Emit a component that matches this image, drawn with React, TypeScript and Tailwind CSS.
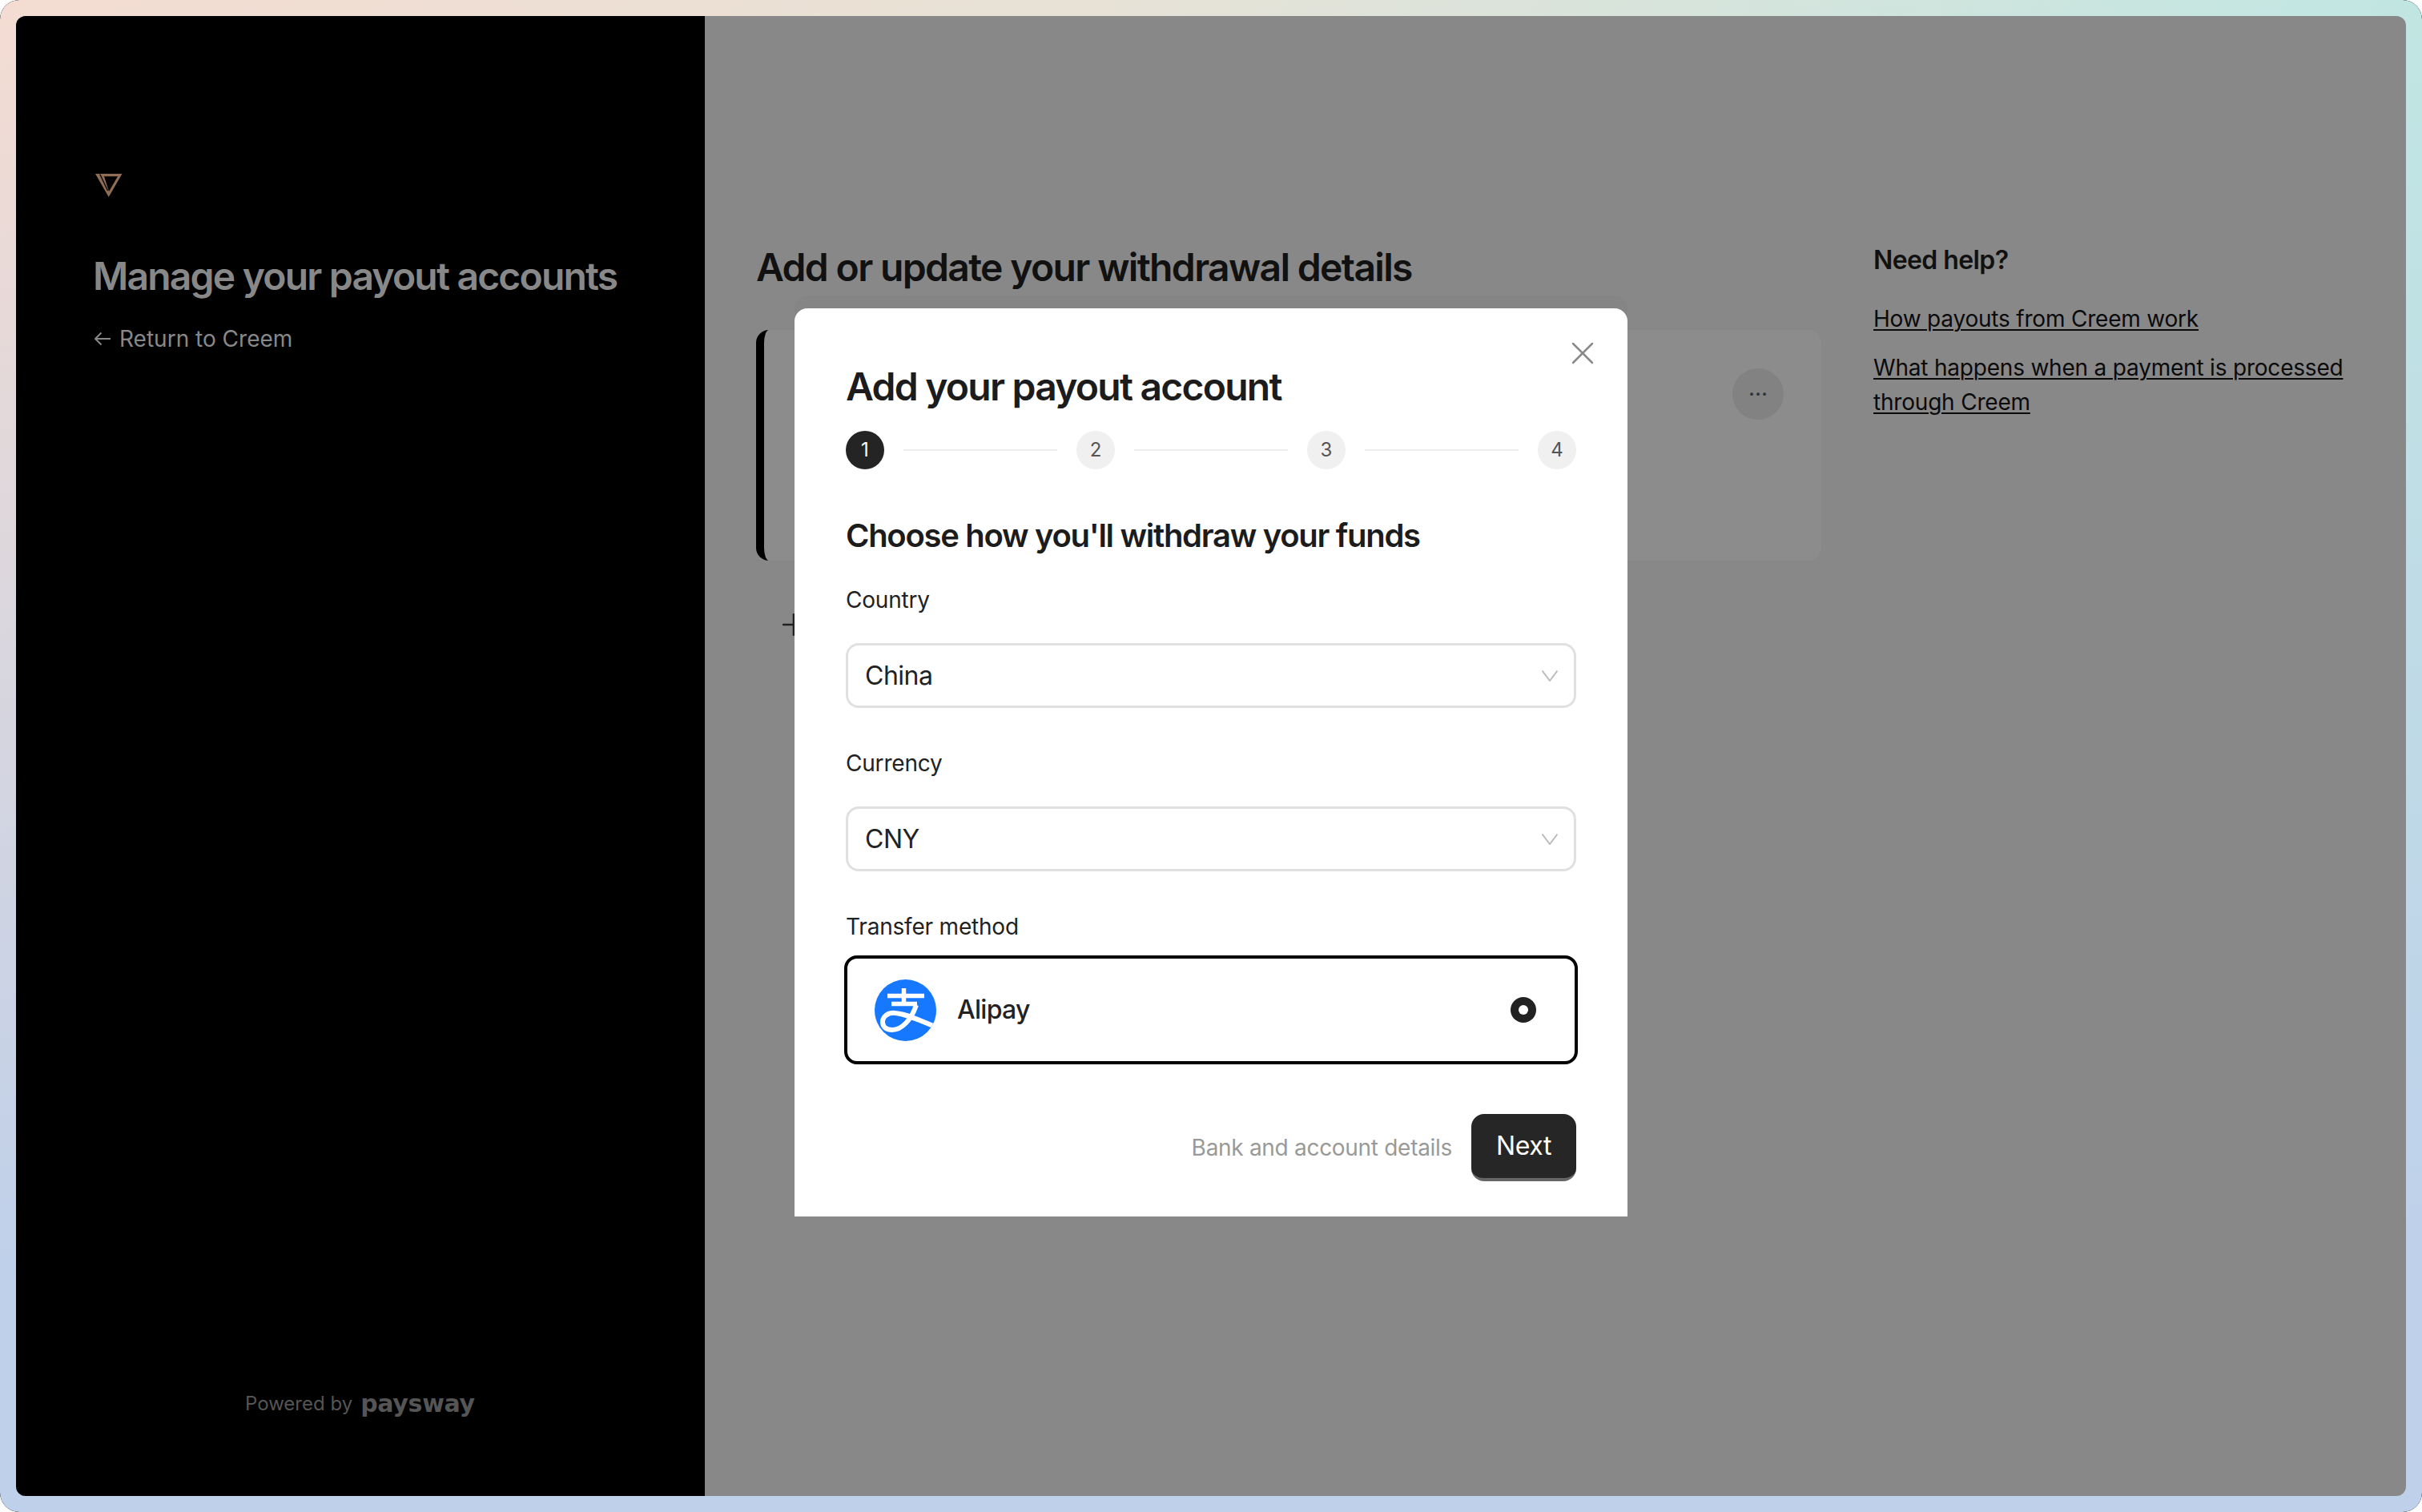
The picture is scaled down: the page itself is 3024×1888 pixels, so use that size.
import { X, Plus } from 'lucide-react';

function Step({ n, active }: { n: number; active?: boolean }) {
  return (
    <div
      className={`flex h-12 w-12 shrink-0 items-center justify-center rounded-full text-[24px] ${
        active ? 'bg-[#242424] text-white' : 'bg-[#f0f0f0] text-[#555555]'
      }`}
    >
      {n}
    </div>
  );
}

function StepLine() {
  return <div className="h-[2px] flex-1 bg-[#eeeeee]" />;
}

function SelectField({ label, value }: { label: string; value: string }) {
  return (
    <div className="flex flex-col">
      <label className="h-[34px] text-[28px] leading-[34px] tracking-[-0.2px] text-[#222222]">{label}</label>
      <div className="mt-[37px] flex h-[81px] items-center justify-between rounded-[16px] border-[3px] border-[#e0e0e0] pl-[21px] pr-[20px] text-[32px] tracking-[-0.5px] text-[#222222]">
        {value}
        <svg viewBox="0 0 20 14" className="h-[14px] w-[20px]">
          <path d="M0.5 0.5 10 13 19.5 0.5" fill="none" stroke="#bdbdbd" strokeWidth="2" />
        </svg>
      </div>
    </div>
  );
}

function AlipayIcon() {
  return (
    <svg viewBox="0 0 77 77" className="h-[77px] w-[77px] shrink-0">
      <clipPath id="alipay-circle">
        <circle cx="38.5" cy="38.5" r="38.5" />
      </clipPath>
      <circle cx="38.5" cy="38.5" r="38.5" fill="#1677ff" />
      <g clipPath="url(#alipay-circle)" fill="none" stroke="#fff" strokeWidth="5.5">
        <path d="M16 20.5H62M36.5 11v19.5M21 30.5H53" />
        <path d="M52 32C46 50 34 63 22 63 13 63 10 58 10 53 10 46 17 41 26 42 38 43 55 50 80 61" strokeWidth="6" />
      </g>
    </svg>
  );
}

export default function App() {
  return (
    <div className="h-[1888px] w-[3024px] overflow-hidden rounded-[24px] bg-[#0b1420]">
      <div className="h-full w-full rounded-[24px] bg-[linear-gradient(to_bottom,rgba(190,210,234,0)_0%,#bed0ea_85%),linear-gradient(to_right,#f4dcd2,#e8e2d6_45%,#c0e6e2)] p-[20px] font-['Inter','Noto_Sans',sans-serif]">
        <div className="flex h-full overflow-hidden rounded-[12px] bg-[#888888]">
          <aside className="flex w-[860px] shrink-0 flex-col bg-black pl-[96px] pr-[60px]">
            <svg viewBox="0 0 34 30" className="ml-[3px] mt-[197px] h-[30px] w-[34px]">
              <path fillRule="evenodd" d="M0 0H33.5L16.7 29ZM11 3.3 17 22 28 3.3Z" fill="#8f6c55" />
              <path d="M5.7 0.5 15.5 21" stroke="#000" strokeWidth="1.3" />
            </svg>
            <h1 className="mt-[66px] whitespace-nowrap text-[48px] font-semibold leading-[64px] tracking-[-1.8px] text-[#888888]">
              Manage your payout accounts
            </h1>
            <a className="mt-[28px] flex items-center gap-[10px] text-[28px] leading-[36px] text-[#888888]">
              <svg viewBox="0 0 22 18" className="ml-[1px] h-[18px] w-[22px]">
                <path d="M21 9H2M9.5 1.5 2 9l7.5 7.5" fill="none" stroke="#888888" strokeWidth="2" />
              </svg>
              Return to Creem
            </a>
            <div className="mt-auto mb-[100px] flex items-center gap-[10px] pl-[190px] text-[#555555]">
              <span className="whitespace-nowrap text-[24px] leading-[30px]">Powered by</span>
              <span className="font-['DejaVu_Sans',sans-serif] text-[30px] font-bold leading-[30px] tracking-[-0.3px]">
                paysway
              </span>
            </div>
          </aside>

          <main className="relative flex flex-1 gap-[65px] pl-[64px] pt-[282px]">
            <section className="w-[1330px] shrink-0">
              <h2 className="text-[48px] font-semibold leading-[64px] tracking-[-1.65px] text-[#111111]">
                Add or update your withdrawal details
              </h2>
              <div className="mt-[46px] flex h-[288px] justify-end rounded-[16px] border-l-[10px] border-black bg-[#8c8c8c] pr-[47px] pt-[48px]">
                <div className="flex h-16 w-16 items-center justify-center rounded-full bg-[#828282] text-[28px] leading-none text-[#333333]">
                  ···
                </div>
              </div>
              <div className="mt-[58px] pl-[25px]">
                <Plus className="h-[44px] w-[44px] text-[#222222]" strokeWidth={1.4} />
              </div>
            </section>

            <aside className="pt-[1px]">
              <h3 className="text-[32px] font-semibold leading-[44px] tracking-[-0.6px] text-[#111111]">Need help?</h3>
              <div className="mt-[30px] flex flex-col gap-[18px] text-[28px] leading-[43px] tracking-[-0.2px] text-[#0a0a0a]">
                <a className="underline decoration-2 underline-offset-[3px]">How payouts from Creem work</a>
                <a className="w-[600px] underline decoration-2 underline-offset-[3px]">
                  What happens when a payment is processed through Creem
                </a>
              </div>
            </aside>

            <div className="absolute left-[112px] top-[365px] h-[1134px] w-[1040px] rounded-t-[16px] bg-white px-[64px] pt-[70px] shadow-[0_-16px_0_rgba(0,0,0,0.02)]">
              <X className="absolute right-[32px] top-[32px] h-[48px] w-[48px] text-[#8a8a8a]" strokeWidth={1.25} />
              <h2 className="text-[48px] font-semibold leading-[56px] tracking-[-1.75px] text-[#1c1c1c]">
                Add your payout account
              </h2>
              <div className="mt-[27px] flex items-center gap-[24px]">
                <Step n={1} active />
                <StepLine />
                <Step n={2} />
                <StepLine />
                <Step n={3} />
                <StepLine />
                <Step n={4} />
              </div>
              <h3 className="mt-[59px] text-[40px] font-semibold leading-[48px] tracking-[-1.3px] text-[#1c1c1c]">
                Choose how you'll withdraw your funds
              </h3>
              <div className="mt-[39px] flex flex-col gap-[52px]">
                <SelectField label="Country" value="China" />
                <SelectField label="Currency" value="CNY" />
                <div>
                  <label className="block h-[34px] text-[28px] leading-[34px] tracking-[-0.2px] text-[#222222]">
                    Transfer method
                  </label>
                  <div className="-mx-[2px] mt-[19px] flex h-[136px] items-center rounded-[16px] border-[4px] border-black pl-[34px] pr-[48px]">
                    <AlipayIcon />
                    <span className="ml-[26px] text-[32px] font-medium tracking-[-0.7px] text-[#222222]">Alipay</span>
                    <span className="ml-auto flex h-[32px] w-[32px] items-center justify-center rounded-full bg-[#222222]">
                      <span className="h-[12px] w-[12px] rounded-full bg-white" />
                    </span>
                  </div>
                </div>
              </div>
              <div className="mt-[62px] flex items-center justify-end gap-[24px]">
                <span className="text-[28px] tracking-[-0.3px] text-[#999999]">Bank and account details</span>
                <button className="h-[84px] w-[131px] rounded-[16px] border-b-[4px] border-[#666666] bg-[#262626] text-[32px] font-normal tracking-[-0.4px] text-white">
                  Next
                </button>
              </div>
            </div>
          </main>
        </div>
      </div>
    </div>
  );
}
